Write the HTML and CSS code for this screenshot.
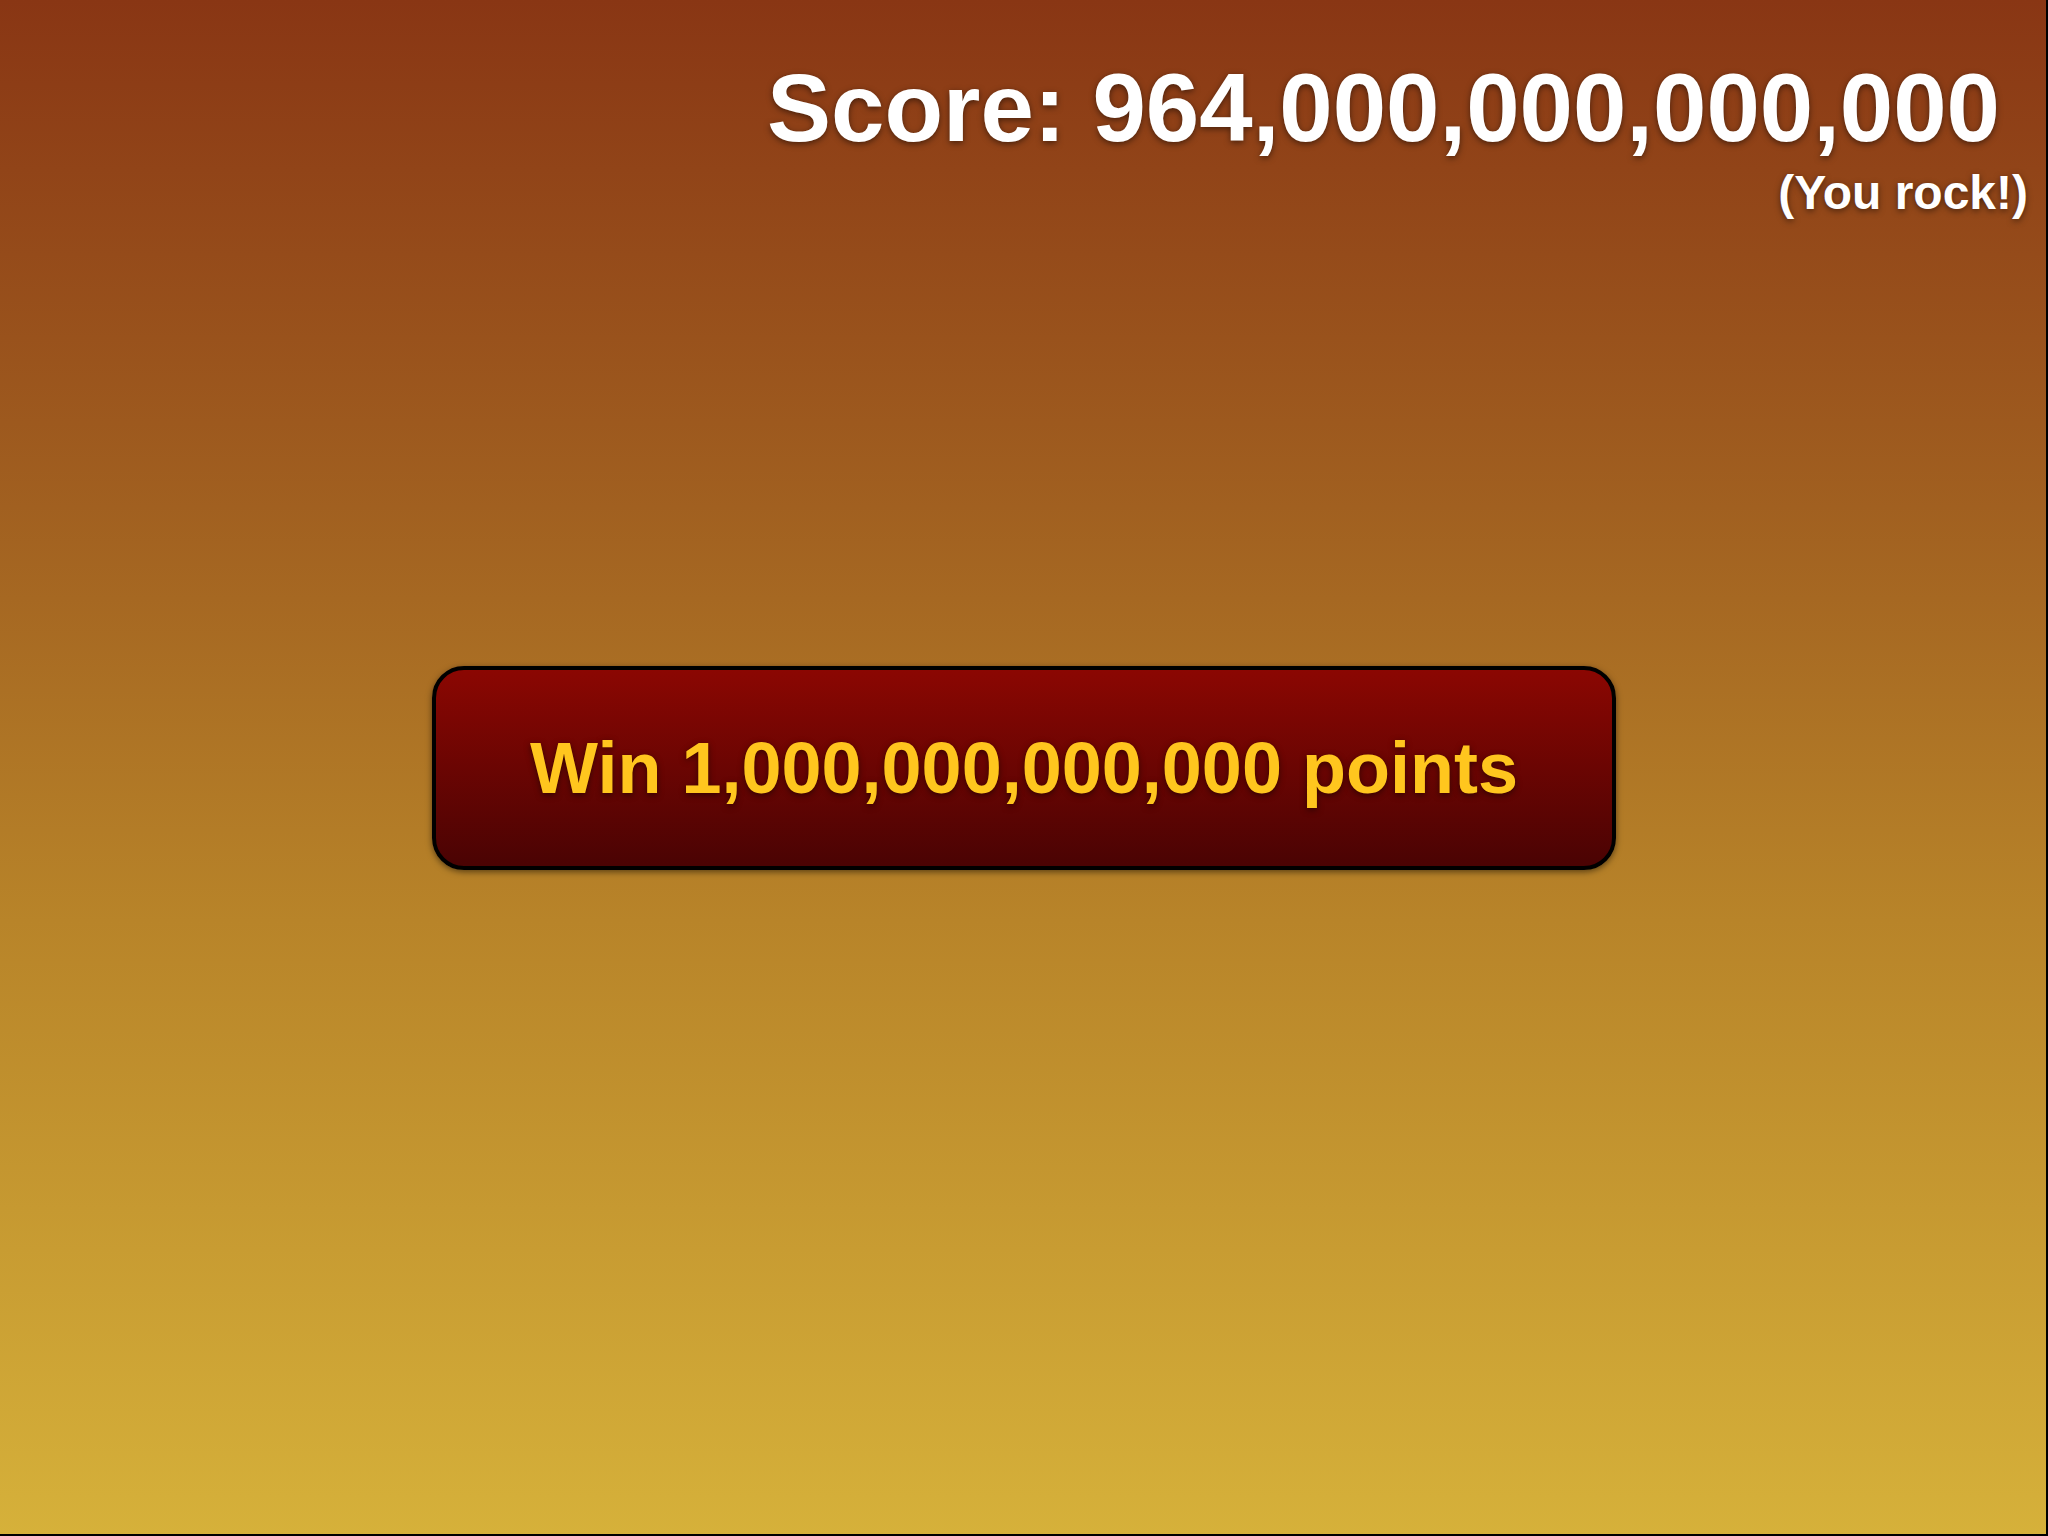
FILE: index.html
```html
<!DOCTYPE html>
<html lang="en">
<head>
  <meta charset="UTF-8" />
  <meta name="viewport" content="width=device-width, initial-scale=1.0"/>
  <title>Score</title>
  <link rel="stylesheet" href="styles.css">
</head>
<body>

  <header class="scoreboard">
    <h1 class="score">Score: <span id="score">964,000,000,000,000</span></h1>
    <p class="message">(You rock!)</p>
  </header>

  <main class="game">
    <button type="button" class="win" id="win">Win 1,000,000,000,000 points</button>
  </main>

</body>
</html>
```

FILE: styles.css
```css
* {
  box-sizing: border-box;
}

body {
  font-family: "Liberation Sans", Arial, sans-serif;
  font-weight: bold;
  background: linear-gradient(#893614, #a16020 33%, #b88429 60%, #d6b13a);
  box-shadow: inset -2px -2px black;
  display: grid;
  grid-template-rows: 1fr auto 1fr;
  min-height: 100vh;
  margin: 0;
}

.scoreboard {
  color: white;
  text-align: right;
  padding: 52px 20px 0;
  text-shadow: 0 2px 6px rgba(0, 0, 0, 0.5);
}

.score {
  font-size: 96px;
  line-height: 112px;
  margin: 0;
  padding-right: 28px;
}

.message {
  font-size: 48px;
  line-height: 58px;
  margin: 0;
}

.game {
  display: flex;
  justify-content: center;
}

.win {
  font-family: inherit;
  font-size: 72px;
  line-height: 84px;
  font-weight: bold;
  color: #ffc61e;
  background: linear-gradient(#8b0702, #4a0303);
  border: 4px solid black;
  border-radius: 32px;
  padding: 56px 94px;
  text-shadow: 0 2px 6px rgba(0, 0, 0, 0.5);
  box-shadow: 0 2px 6px rgba(0, 0, 0, 0.5);
  cursor: pointer;
}
```
